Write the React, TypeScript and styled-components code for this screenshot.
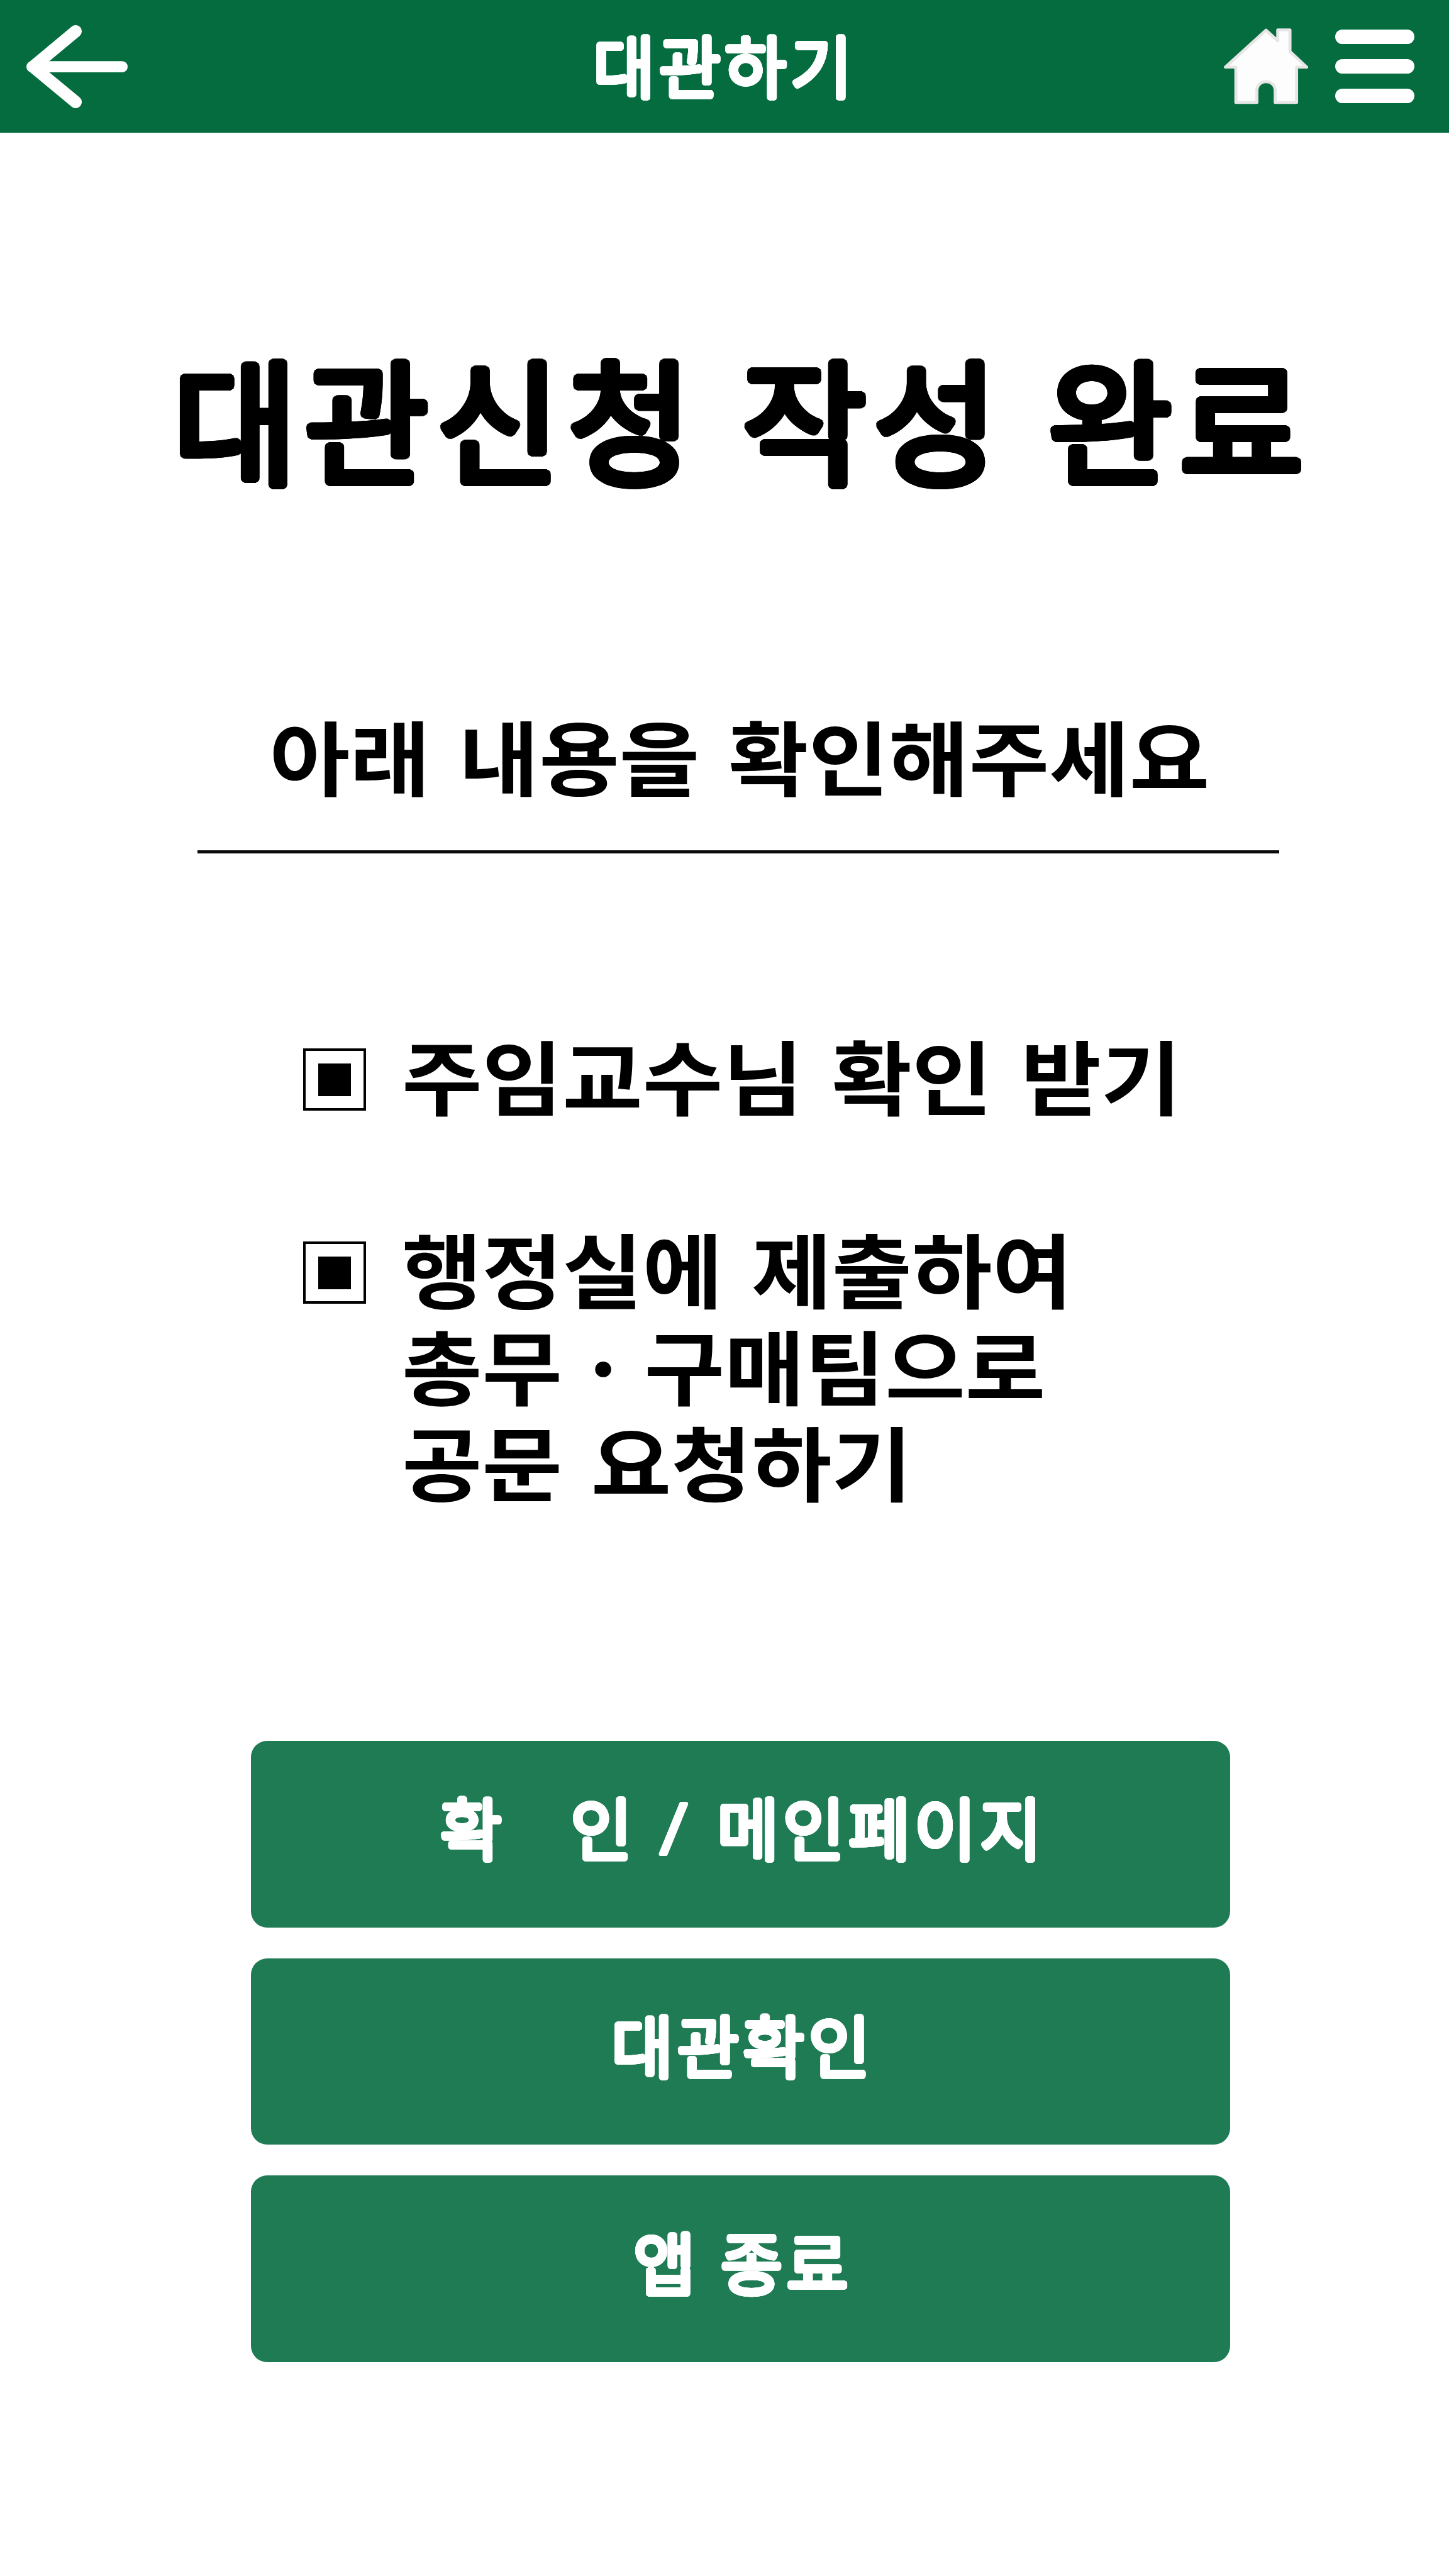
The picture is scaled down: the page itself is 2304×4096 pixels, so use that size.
import React from "react";
import styled, { createGlobalStyle, css } from "styled-components";

const GlobalStyle = createGlobalStyle`
  *, *::before, *::after { box-sizing: border-box; }
  body {
    margin: 0;
    background: #ffffff;
    font-family: "Noto Sans CJK KR", "Noto Sans", sans-serif;
  }
`;

// Thickens light glyphs evenly on every side, which gives them round ends.
const roundOutline = Array.from({ length: 24 }, (_, i) => {
  const angle = (i * Math.PI) / 12;
  const x = (Math.cos(angle) * 0.035).toFixed(4);
  const y = (Math.sin(angle) * 0.035).toFixed(4);
  return `${x}em ${y}em 0 currentColor`;
}).join(", ");

const roundedText = css`
  font-weight: 350;
  text-shadow: ${roundOutline};
  white-space: pre;
`;

const wideText = css`
  font-size: 129px;
  font-weight: 700;
  word-spacing: 13.1px;
  white-space: nowrap;
`;

const Screen = styled.div`
  width: 2304px;
  height: 4096px;
  overflow: hidden;
  display: flex;
  flex-direction: column;
  background: #ffffff;
  color: #000000;
`;

const TopBar = styled.header`
  flex: none;
  height: 211px;
  padding: 0 55px 0 42px;
  display: grid;
  grid-template-columns: 1fr auto 1fr;
  align-items: center;
  justify-items: start;
  background: #046c3e;
  color: #ffffff;
`;

const BarTitle = styled.h1`
  ${roundedText}
  margin: 0 0 10px 13px;
  font-size: 107px;
  line-height: 160px;
  letter-spacing: 6px;
`;

const IconButton = styled.button`
  padding: 0;
  border: 0;
  background: none;
  color: inherit;
  display: block;
  line-height: 0;
`;

const BarActions = styled.div`
  justify-self: end;
  display: flex;
  align-items: center;
  gap: 43px;
`;

const Content = styled.main`
  flex: 1;
  padding: 335px 0 0 48px;
  display: flex;
  flex-direction: column;
  align-items: center;
`;

const Headline = styled.h2`
  ${roundedText}
  margin: 0;
  padding-left: 8px;
  font-size: 214px;
  line-height: 230px;
  letter-spacing: 12.2px;
  word-spacing: 8.5px;
`;

const Notice = styled.h3`
  ${wideText}
  width: 1720px;
  margin: 347px 5px 0 0;
  padding: 0 0 75px 6px;
  border-bottom: 5px solid #0a0a0a;
  text-align: center;
  line-height: 154px;
`;

const NoticeText = styled.span`
  display: inline-block;
  transform: scaleX(1.075);
`;

const Steps = styled.ul`
  align-self: stretch;
  list-style: none;
  margin: 274px 0 0;
  padding: 0 0 0 434px;
  display: flex;
  flex-direction: column;
  gap: 153.6px;
`;

const Step = styled.li`
  display: flex;
  align-items: flex-start;
  gap: 57px;
`;

const Marker = styled.span`
  flex: none;
  width: 100px;
  height: 99px;
  margin-top: 36px;
  border: 4px solid #000000;
  display: grid;
  place-items: center;
  &::before {
    content: "";
    width: 52px;
    height: 52px;
    background: #000000;
  }
`;

const StepText = styled.div`
  ${wideText}
  line-height: 153.6px;
  transform: scaleX(1.075);
  transform-origin: left center;
`;

const StepLine = styled.span`
  display: block;
`;

const MiddleDot = styled.span`
  word-spacing: -6.9px;
`;

const Actions = styled.div`
  margin-top: 369px;
  margin-left: 3px;
  display: flex;
  flex-direction: column;
  gap: 49px;
`;

const ActionButton = styled.button`
  ${roundedText}
  width: 1557px;
  height: 296.7px;
  padding: 0 0 27px 7px;
  border: 0;
  border-radius: 26px;
  background: #1f7b54;
  color: #ffffff;
  font-family: inherit;
  font-size: 107px;
  line-height: 160px;
  letter-spacing: 6px;
  word-spacing: 4.5px;
`;

const Slash = styled.span`
  display: inline-block;
  margin: 0 8px 0 4px;
  transform: translateY(-0.05em) scaleY(0.78);
`;

const BackIcon = () => (
  <svg width="161" height="132" viewBox="165 157 627 515" preserveAspectRatio="none" fill="none" stroke="#ffffff" strokeLinecap="round" strokeLinejoin="round">
    <path strokeWidth="70" d="M757 415H200" />
    <path strokeWidth="76" d="M470 195L206 415L470 634" />
  </svg>
);

const HomeIcon = () => (
  <svg width="134.5" height="120.5" viewBox="238 181 499 470" preserveAspectRatio="none">
    <path
      fill="#fdfdfd"
      stroke="#e6e6e6"
      strokeWidth="18"
      strokeLinejoin="round"
      d="M487 192L556 259V191H628V325L727 422H667V641H541V568C541 535 518 512 487 512C456 512 433 535 433 568V641H309V422H247Z"
    />
  </svg>
);

const MenuIcon = () => (
  <svg width="126" height="117" viewBox="0 0 126 117" fill="#ffffff">
    <rect width="126" height="23" rx="11.5" />
    <rect y="47" width="126" height="23" rx="11.5" />
    <rect y="94" width="126" height="23" rx="11.5" />
  </svg>
);

export default function App() {
  return (
    <>
      <GlobalStyle />
      <Screen>
        <TopBar>
          <IconButton aria-label="뒤로">
            <BackIcon />
          </IconButton>
          <BarTitle>대관하기</BarTitle>
          <BarActions>
            <IconButton aria-label="홈">
              <HomeIcon />
            </IconButton>
            <IconButton aria-label="메뉴">
              <MenuIcon />
            </IconButton>
          </BarActions>
        </TopBar>
        <Content>
          <Headline>대관신청 작성 완료</Headline>
          <Notice>
            <NoticeText>아래 내용을 확인해주세요</NoticeText>
          </Notice>
          <Steps>
            <Step>
              <Marker />
              <StepText>
                <StepLine>주임교수님 확인 받기</StepLine>
              </StepText>
            </Step>
            <Step>
              <Marker />
              <StepText>
                <StepLine>행정실에 제출하여</StepLine>
                <StepLine>
                  총무<MiddleDot> · </MiddleDot>구매팀으로
                </StepLine>
                <StepLine>공문 요청하기</StepLine>
              </StepText>
            </Step>
          </Steps>
          <Actions>
            <ActionButton>
              {"확   인 "}
              <Slash>/</Slash>
              {" 메인페이지"}
            </ActionButton>
            <ActionButton>대관확인</ActionButton>
            <ActionButton>앱 종료</ActionButton>
          </Actions>
        </Content>
      </Screen>
    </>
  );
}
